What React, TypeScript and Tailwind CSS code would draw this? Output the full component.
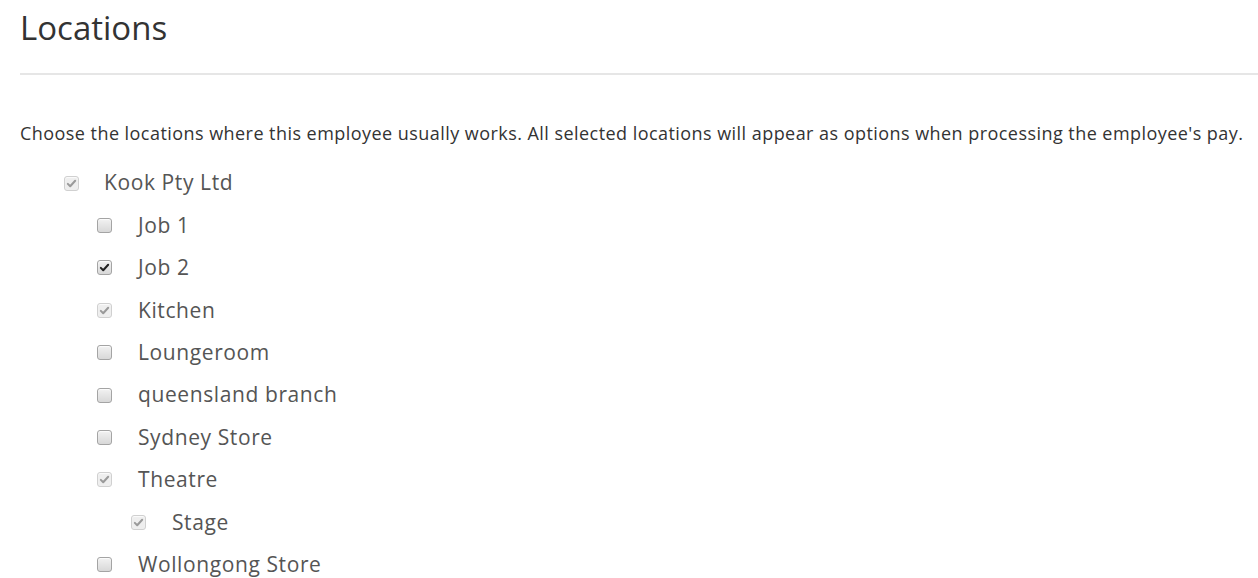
const locations = [
  { name: "Job 1", state: "off", level: 1 },
  { name: "Job 2", state: "on", level: 1 },
  { name: "Kitchen", state: "locked", level: 1 },
  { name: "Loungeroom", state: "off", level: 1 },
  { name: "queensland branch", state: "off", level: 1 },
  { name: "Sydney Store", state: "off", level: 1 },
  { name: "Theatre", state: "locked", level: 1 },
  { name: "Stage", state: "locked", level: 2 },
  { name: "Wollongong Store", state: "off", level: 1 },
]

function Box({ state }: { state: string }) {
  const locked = state === "locked"
  return (
    <span
      className={
        "flex size-[15px] shrink-0 items-center justify-center rounded-[3px] border shadow-[inset_0_1px_1px_rgba(255,255,255,0.8)] " +
        (locked
          ? "border-[#d0d0d0] bg-[#eeeeee]"
          : "border-[#a4a4a4] bg-gradient-to-b from-[#f2f2f2] to-[#d8d8d8]")
      }
    >
      {state !== "off" && (
        <svg viewBox="0 0 12 12" className="size-[11px]">
          <path
            d="M2 6.4 L4.6 9 L10 3"
            fill="none"
            stroke={locked ? "#9a9a9a" : "#222"}
            strokeWidth="2.2"
            strokeLinecap="round"
            strokeLinejoin="round"
          />
        </svg>
      )}
    </span>
  )
}

export default function App() {
  return (
    <div className="min-h-[578px] bg-white pl-5 font-['Open_Sans',sans-serif] text-[#333]">
      <h1 className="pt-[6px] text-[33px] leading-[44px] font-normal text-[#333]">Locations</h1>
      <div className="mt-[23px] h-[2px] bg-[#e6e6e6]" />
      <p className="mt-[46px] text-[18px] leading-[24px] tracking-[0.45px] text-[#333] whitespace-nowrap">
        Choose the locations where this employee usually works. All selected locations will appear as options when processing the employee's pay.
      </p>
      <div className="mt-[17px] pl-[44px]">
        <div className="flex h-[42.4px] items-center gap-[25px] text-[21px] tracking-[0.6px] text-[#555]">
          <Box state="locked" />
          <span>Kook Pty Ltd</span>
        </div>
        {locations.map((loc) => (
          <div
            key={loc.name}
            className={
              "flex h-[42.4px] items-center gap-[26px] text-[21px] tracking-[0.6px] text-[#555] " +
              (loc.level === 2 ? "pl-[67px]" : "pl-[33px]")
            }
          >
            <Box state={loc.state} />
            <span>{loc.name}</span>
          </div>
        ))}
      </div>
    </div>
  )
}
